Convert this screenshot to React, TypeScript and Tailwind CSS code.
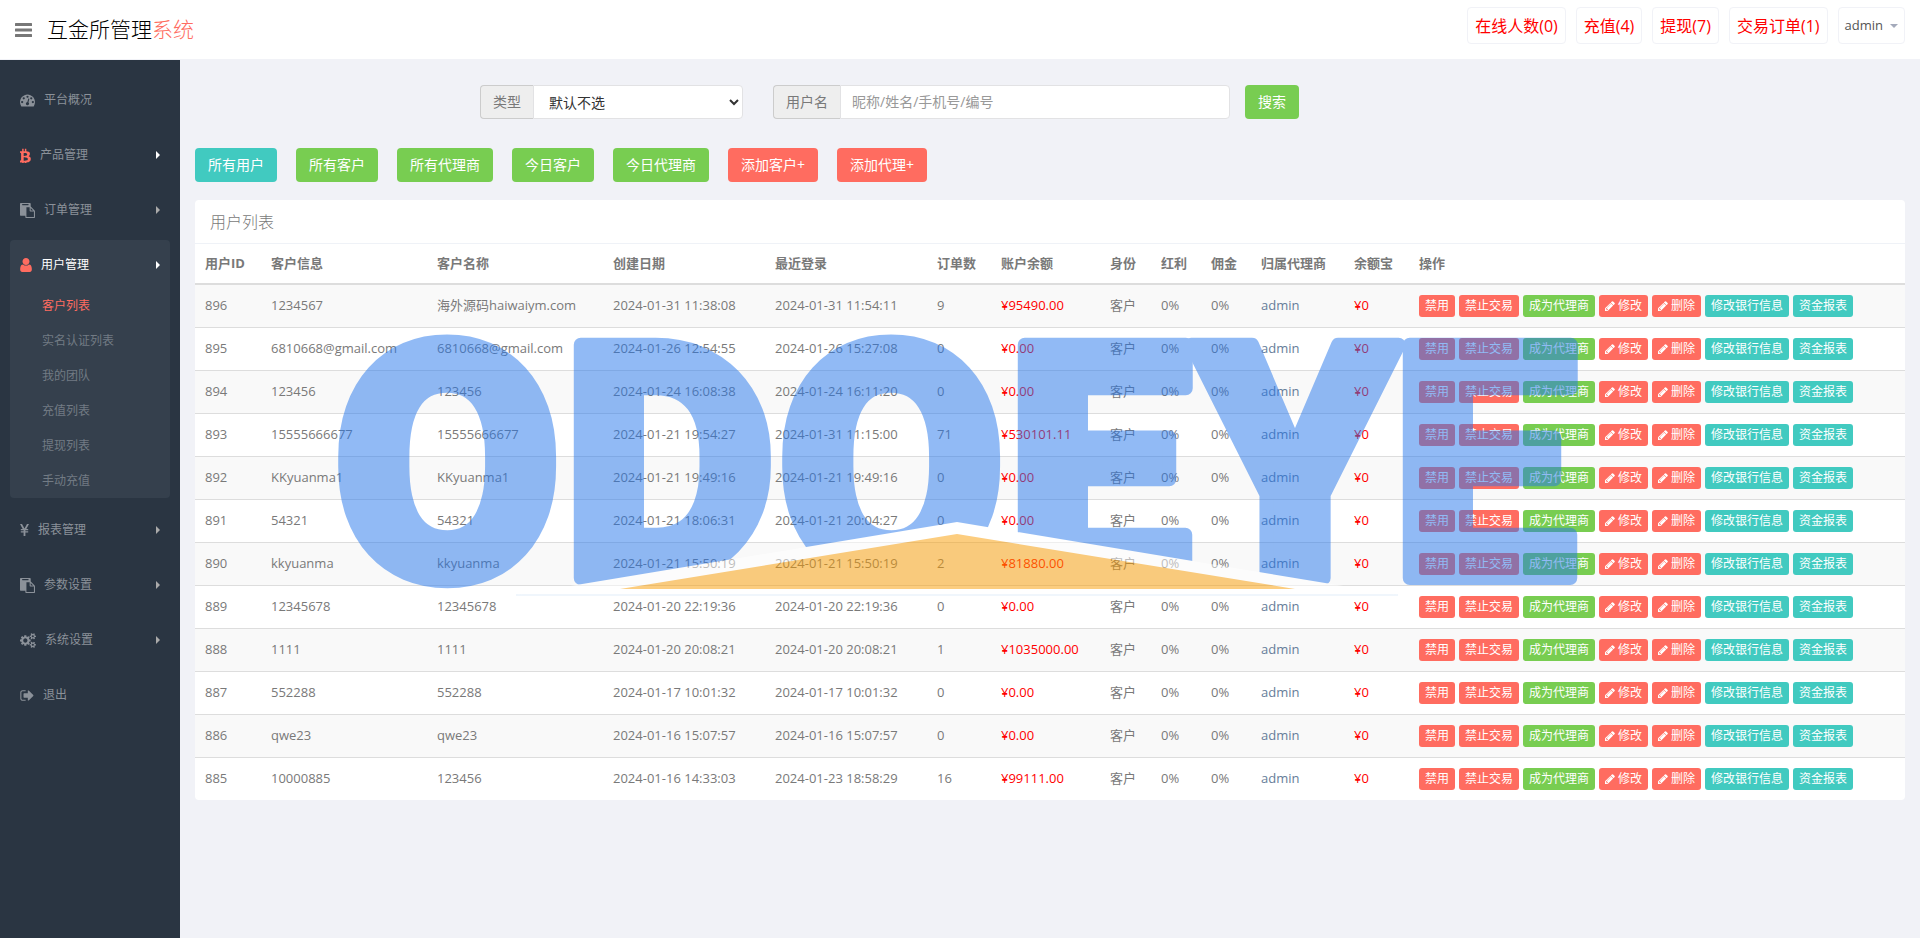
import React from 'react';

type IconName = 'dashboard' | 'bitcoin' | 'paste' | 'user' | 'yen' | 'cogs' | 'signOut';

const PASTE =
  'M768 1664h896v-640h-416q-40 0-68-28t-28-68v-416h-384v1152zm256-1440v-64q0-13-9.5-22.5t-22.5-9.5h-704q-13 0-22.5 9.5t-9.5 22.5v64q0 13 9.5 22.5t22.5 9.5h704q13 0 22.5-9.5t9.5-22.5zm256 672h299l-299-299v299zm512 128v672q0 40-28 68t-68 28h-960q-40 0-68-28t-28-68v-160h-544q-40 0-68-28t-28-68v-1344q0-40 28-68t68-28h1088q40 0 68 28t28 68v328q21 13 36 28l408 408q28 28 48 76t20 88z';

const ICONS: Record<IconName, { box: string; size: string; d: string }> = {
  dashboard: {
    box: '0 64 1792 1792',
    size: 'w-[15px] h-[15px]',
    d: 'M384 1152q0-53-37.5-90.5t-90.5-37.5-90.5 37.5-37.5 90.5 37.5 90.5 90.5 37.5 90.5-37.5 37.5-90.5zm192-448q0-53-37.5-90.5t-90.5-37.5-90.5 37.5-37.5 90.5 37.5 90.5 90.5 37.5 90.5-37.5 37.5-90.5zm428 481l101-382q6-26-7.5-48.5t-38.5-29.5-48 6.5-30 39.5l-101 382q-60 5-107 43.5t-63 98.5q-20 77 20 146t117 89 146-20 89-117q16-60-6-117t-72-91zm660-33q0-53-37.5-90.5t-90.5-37.5-90.5 37.5-37.5 90.5 37.5 90.5 90.5 37.5 90.5-37.5 37.5-90.5zm-640-640q0-53-37.5-90.5t-90.5-37.5-90.5 37.5-37.5 90.5 37.5 90.5 90.5 37.5 90.5-37.5 37.5-90.5zm448 192q0-53-37.5-90.5t-90.5-37.5-90.5 37.5-37.5 90.5 37.5 90.5 90.5 37.5 90.5-37.5 37.5-90.5zm320 448q0 261-141 483-19 29-54 29h-1402q-35 0-54-29-141-221-141-483 0-182 71-348t191-286 286-191 348-71 348 71 286 191 191 286 71 348z',
  },
  bitcoin: {
    box: '290 120 940 1552',
    size: 'w-[11px] h-[15px]',
    d: 'M1217 713q18 182-131 258 117 28 175 103t45 214q-7 71-32.5 125t-64.5 89-97 58.5-121.5 34.5-145.5 15v255h-154v-251q-80 0-122-1v252h-154v-255q-18 0-54-.5t-55-.5h-200l31-183h111q50 0 58-51v-402h16q-6-1-16-1v-287q-13-68-89-68h-111v-164l212 1q64 0 97-1v-252h154v247q82-2 122-2v-245h154v252q79 7 140 22.5t113 45 82.5 78 36.5 114.5zm-215 545q0-36-15-64t-37-46-57.5-30.5-65.5-18.5-74-9-69-3-64.5 1-47.5 1v338q8 0 37 .5t48 .5 53-1.5 58.5-4 57-8.5 55.5-14 47.5-21 39.5-30 24.5-40 9.5-51zm-71-476q0-33-12.5-58.5t-30.5-42-48-28-55-16.5-61.5-8-58-2.5-54 1-39.5.5v307q5 0 34.5.5t46.5 0 50-2 55-5.5 51.5-11 48.5-18.5 37-27 27-38.5 9-51z',
  },
  paste: { box: '0 0 1792 1792', size: 'w-[15px] h-[15px]', d: PASTE },
  user: {
    box: '256 128 1280 1536',
    size: 'w-3 h-[14px]',
    d: 'M1536 1399q0 109-62.5 187t-150.5 78h-854q-88 0-150.5-78t-62.5-187q0-85 8.5-160.5t31.5-152 58.5-131 94-89 134.5-34.5q131 128 313 128t313-128q76 0 134.5 34.5t94 89 58.5 131 31.5 152 8.5 160.5zm-256-887q0 159-112.5 271.5t-271.5 112.5-271.5-112.5-112.5-271.5 112.5-271.5 271.5-112.5 271.5 112.5 112.5 271.5z',
  },
  yen: {
    box: '0 0 9 12',
    size: 'w-[9px] h-3',
    d: 'M0 0h2l2.5 4.6L7 0h2L6.3 5h1.900v1.200H5.400v1h2.800v1.200H5.400V12H3.600V8.400H.8V7.200h2.800v-1H.8V5h1.900z',
  },
  cogs: {
    box: '0 0 1920 1792',
    size: 'w-4 h-[15px]',
    d: 'M896 896q0-106-75-181t-181-75-181 75-75 181 75 181 181 75 181-75 75-181zm768 512q0-52-38-90t-90-38-90 38-38 90q0 53 37.5 90.5t90.5 37.5 90.5-37.5 37.5-90.5zm0-1024q0-52-38-90t-90-38-90 38-38 90q0 53 37.5 90.5t90.5 37.5 90.5-37.5 37.5-90.5zm-384 421v185q0 10-7 19.5t-16 10.5l-155 24q-11 35-32 76 34 48 90 115 7 11 7 20 0 12-7 19-23 30-82.5 89.5t-78.5 59.5q-11 0-21-7l-115-90q-37 19-77 31-11 108-23 155-7 24-30 24h-186q-11 0-20-7.5t-10-17.5l-23-153q-34-10-75-31l-118 89q-7 7-20 7-11 0-21-8-144-133-144-160 0-9 7-19 10-14 41-53t47-61q-23-44-35-82l-152-24q-10-1-17-9.5t-7-19.5v-185q0-10 7-19.5t16-10.5l155-24q11-35 32-76-34-48-90-115-7-11-7-20 0-12 7-20 22-30 82-89t79-59q11 0 21 7l115 90q34-18 77-32 11-108 23-154 7-24 30-24h186q11 0 20 7.5t10 17.5l23 153q34 10 75 31l118-89q8-7 20-7 11 0 21 8 144 133 144 160 0 8-7 19-12 16-42 54t-45 60q23 48 34 82l152 23q10 2 17 10.5t7 19.5zm640 533v140q0 16-149 31-12 27-30 52 51 113 51 138 0 4-4 7-122 71-124 71-8 0-46-47t-52-68q-20 2-30 2t-30-2q-14 21-52 68t-46 47q-2 0-124-71-4-3-4-7 0-25 51-138-18-25-30-52-149-15-149-31v-140q0-16 149-31 13-29 30-52-51-113-51-138 0-4 4-7 4-2 35-20t59-34 30-16q8 0 46 46.5t52 67.5q20-2 30-2t30 2q51-71 92-112l6-2q4 0 124 70 4 3 4 7 0 25-51 138 17 23 30 52 149 15 149 31zm0-1024v140q0 16-149 31-12 27-30 52 51 113 51 138 0 4-4 7-122 71-124 71-8 0-46-47t-52-68q-20 2-30 2t-30-2q-14 21-52 68t-46 47q-2 0-124-71-4-3-4-7 0-25 51-138-18-25-30-52-149-15-149-31v-140q0-16 149-31 13-29 30-52-51-113-51-138 0-4 4-7 4-2 35-20t59-34 30-16q8 0 46 46.5t52 67.5q20-2 30-2t30 2q51-71 92-112l6-2q4 0 124 70 4 3 4 7 0 25-51 138 17 23 30 52 149 15 149 31z',
  },
  signOut: {
    box: '64 0 1600 1792',
    size: 'w-[14px] h-[15px]',
    d: 'M704 1440q0 4 1 20t.5 26.5-3 23.5-10 19.5-20.5 6.5h-320q-119 0-203.5-84.5t-84.5-203.5v-704q0-119 84.5-203.5t203.5-84.5h320q13 0 22.5 9.5t9.5 22.5q0 4 1 20t.5 26.5-3 23.5-10 19.5-20.5 6.5h-320q-66 0-113 47t-47 113v704q0 66 47 113t113 47h312l11.5 1 11.5 3 8 5.5 7 9 2 13.5zm928-544q0 26-19 45l-544 544q-19 19-45 19t-45-19-19-45v-288h-448q-26 0-45-19t-19-45v-384q0-26 19-45t45-19h448v-288q0-26 19-45t45-19 45 19l544 544q19 19 19 45z',
  },
};

const PENCIL =
  'M491 1536l91-91-235-235-91 91v107h128v128h107zm523-928q0-22-22-22-10 0-17 7l-542 542q-7 7-7 17 0 22 22 22 10 0 17-7l542-542q7-7 7-17zm-54-192l416 416-832 832h-416v-416zm683 96q0 53-37 90l-166 166-416-416 166-165q36-38 90-38 53 0 91 38l235 234q37 39 37 91z';

interface MenuItem {
  label: string;
  icon: IconName;
  arrow?: boolean;
  hot?: boolean;
  children?: string[];
}

const menu: MenuItem[] = [
  { label: '平台概况', icon: 'dashboard' },
  { label: '产品管理', icon: 'bitcoin', arrow: true, hot: true },
  { label: '订单管理', icon: 'paste', arrow: true },
  {
    label: '用户管理',
    icon: 'user',
    arrow: true,
    hot: true,
    children: ['客户列表', '实名认证列表', '我的团队', '充值列表', '提现列表', '手动充值'],
  },
  { label: '报表管理', icon: 'yen', arrow: true },
  { label: '参数设置', icon: 'paste', arrow: true },
  { label: '系统设置', icon: 'cogs', arrow: true },
  { label: '退出', icon: 'signOut' },
];

const notices = ['在线人数(0)', '充值(4)', '提现(7)', '交易订单(1)'];

const filters = [
  { label: '所有用户', color: 'bg-[#41cac0]' },
  { label: '所有客户', color: 'bg-[#78cd51]' },
  { label: '所有代理商', color: 'bg-[#78cd51]' },
  { label: '今日客户', color: 'bg-[#78cd51]' },
  { label: '今日代理商', color: 'bg-[#78cd51]' },
  { label: '添加客户+', color: 'bg-[#ff6c60]' },
  { label: '添加代理+', color: 'bg-[#ff6c60]' },
];

const columns = [
  { title: '用户ID', width: 'w-[66px]' },
  { title: '客户信息', width: 'w-[166px]' },
  { title: '客户名称', width: 'w-[176px]' },
  { title: '创建日期', width: 'w-[162px]' },
  { title: '最近登录', width: 'w-[162px]' },
  { title: '订单数', width: 'w-[64px]' },
  { title: '账户余额', width: 'w-[109px]' },
  { title: '身份', width: 'w-[51px]' },
  { title: '红利', width: 'w-[50px]' },
  { title: '佣金', width: 'w-[50px]' },
  { title: '归属代理商', width: 'w-[93px]' },
  { title: '余额宝', width: 'w-[65px]' },
  { title: '操作', width: 'w-auto' },
];

// id, info, name, created, last login, orders, balance
const users = [
  ['896', '1234567', '海外源码haiwaiym.com', '2024-01-31 11:38:08', '2024-01-31 11:54:11', '9', '95490.00'],
  ['895', '6810668@gmail.com', '6810668@gmail.com', '2024-01-26 12:54:55', '2024-01-26 15:27:08', '0', '0.00'],
  ['894', '123456', '123456', '2024-01-24 16:08:38', '2024-01-24 16:11:20', '0', '0.00'],
  ['893', '15555666677', '15555666677', '2024-01-21 19:54:27', '2024-01-31 11:15:00', '71', '530101.11'],
  ['892', 'KKyuanma1', 'KKyuanma1', '2024-01-21 19:49:16', '2024-01-21 19:49:16', '0', '0.00'],
  ['891', '54321', '54321', '2024-01-21 18:06:31', '2024-01-21 20:04:27', '0', '0.00'],
  ['890', 'kkyuanma', 'kkyuanma', '2024-01-21 15:50:19', '2024-01-21 15:50:19', '2', '81880.00'],
  ['889', '12345678', '12345678', '2024-01-20 22:19:36', '2024-01-20 22:19:36', '0', '0.00'],
  ['888', '1111', '1111', '2024-01-20 20:08:21', '2024-01-20 20:08:21', '1', '1035000.00'],
  ['887', '552288', '552288', '2024-01-17 10:01:32', '2024-01-17 10:01:32', '0', '0.00'],
  ['886', 'qwe23', 'qwe23', '2024-01-16 15:07:57', '2024-01-16 15:07:57', '0', '0.00'],
  ['885', '10000885', '123456', '2024-01-16 14:33:03', '2024-01-23 18:58:29', '16', '99111.00'],
];

const actions = [
  { label: '禁用', color: 'bg-[#ff6c60]' },
  { label: '禁止交易', color: 'bg-[#ff6c60]' },
  { label: '成为代理商', color: 'bg-[#78cd51]' },
  { label: '修改', color: 'bg-[#ff6c60]', pencil: true },
  { label: '删除', color: 'bg-[#ff6c60]', pencil: true },
  { label: '修改银行信息', color: 'bg-[#41cac0]' },
  { label: '资金报表', color: 'bg-[#41cac0]' },
];

function Icon({ name }: { name: IconName }) {
  const icon = ICONS[name];
  return (
    <svg className={`${icon.size} shrink-0`} viewBox={icon.box} fill="currentColor" aria-hidden="true">
      <path d={icon.d} />
    </svg>
  );
}

function Header() {
  return (
    <header className="flex h-[60px] items-start justify-between border-b border-[#f1f2f7] bg-white px-[15px]">
      <div className="flex h-[60px] items-center gap-[15px]">
        <button type="button" aria-label="菜单" className="text-[#777777]">
          <svg className="h-[14px] w-[17px]" viewBox="0 0 17 14" fill="currentColor">
            <rect width="17" height="3" rx="0.500" />
            <rect y="5.500" width="17" height="3" rx="0.500" />
            <rect y="11" width="17" height="3" rx="0.500" />
          </svg>
        </button>
        <a href="#" className="text-[21px] font-light text-black">
          互金所管理<span className="text-[#ff6c60]">系统</span>
        </a>
      </div>
      <nav className="flex gap-[10px] pt-[7px]">
        {notices.map((text) => (
          <a
            key={text}
            href="#"
            className="flex h-[37px] items-center rounded border border-[#f1f2f7] px-[7px] text-base text-[#ff0000]"
          >
            {text}
          </a>
        ))}
        <button
          type="button"
          className="flex h-[37px] items-center gap-[7px] rounded border border-[#f1f2f7] px-[6px] text-[13px] text-[#555555]"
        >
          admin
          <svg className="h-1 w-2" viewBox="0 0 8 4" fill="#a4aabb">
            <path d="M0 0h8L4 4z" />
          </svg>
        </button>
      </nav>
    </header>
  );
}

function Sidebar() {
  return (
    <aside className="w-[180px] shrink-0 bg-[#2a3542] px-[10px] pt-[15px] text-xs">
      <ul className="flex flex-col gap-[7px]">
        {menu.map((item) => (
          <li key={item.label} className={item.children ? 'rounded bg-[#35404d]' : ''}>
            <a
              href="#"
              className={`flex h-12 items-center gap-[9px] px-[10px] pt-[2px] ${item.children ? 'text-white' : 'text-[#8b9199]'}`}
            >
              <span className={item.hot ? 'text-[#ff6c60]' : ''}>
                <Icon name={item.icon} />
              </span>
              {item.label}
              {item.arrow && (
                <svg
                  className={`ml-auto h-2 w-1 ${item.hot ? 'text-white' : 'text-[#aaaaaa]'}`}
                  viewBox="0 0 4 8"
                  fill="currentColor"
                >
                  <path d="M0 0l4 4-4 4z" />
                </svg>
              )}
            </a>
            {item.children && (
              <ul>
                {item.children.map((child, i) => (
                  <li key={child}>
                    <a
                      href="#"
                      className={`flex h-[35px] items-center pl-8 ${i === 0 ? 'text-[#ff6c60]' : 'text-[#727b84]'}`}
                    >
                      {child}
                    </a>
                  </li>
                ))}
              </ul>
            )}
          </li>
        ))}
      </ul>
    </aside>
  );
}

function SearchForm() {
  return (
    <form className="flex pl-[285px] text-sm" onSubmit={(e) => e.preventDefault()}>
      <div className="flex h-[34px] w-[263px]">
        <label
          htmlFor="type"
          className="flex w-[53px] shrink-0 items-center justify-center rounded-l border border-r-0 border-[#cccccc] bg-[#eeeeee] text-[#797979]"
        >
          类型
        </label>
        <select id="type" className="min-w-0 flex-1 rounded-r border border-[#e2e2e4] bg-white px-[11px] text-[#333333]">
          <option>默认不选</option>
        </select>
      </div>
      <div className="ml-[30px] flex h-[34px] w-[457px]">
        <label
          htmlFor="username"
          className="flex w-[67px] shrink-0 items-center justify-center rounded-l border border-r-0 border-[#cccccc] bg-[#eeeeee] text-[#797979]"
        >
          用户名
        </label>
        <input
          id="username"
          type="text"
          placeholder="昵称/姓名/手机号/编号"
          className="min-w-0 flex-1 rounded-r border border-[#e2e2e4] bg-white px-[11px] placeholder:text-[#999999]"
        />
      </div>
      <button type="submit" className="ml-[15px] h-[34px] rounded bg-[#78cd51] px-[13px] text-white">
        搜索
      </button>
    </form>
  );
}

function UserTable() {
  return (
    <section className="mt-[18px] rounded bg-white">
      <h2 className="flex h-11 items-center border-b border-[#eff2f7] px-[15px] text-base font-light">用户列表</h2>
      <table className="w-full table-fixed border-collapse text-left">
        <thead>
          <tr className="h-10 border-b-2 border-[#dddddd]">
            {columns.map((col) => (
              <th key={col.title} className={`${col.width} whitespace-nowrap px-[10px] font-bold`}>
                {col.title}
              </th>
            ))}
          </tr>
        </thead>
        <tbody>
          {users.map(([id, info, name, created, login, orders, balance]) => (
            <tr key={id} className="h-[43px] whitespace-nowrap border-b border-[#dddddd] last:border-b-0 odd:bg-[#f9f9f9]">
              <td className="px-[10px]">{id}</td>
              <td className="px-[10px]">{info}</td>
              <td className="px-[10px]">{name}</td>
              <td className="px-[10px]">{created}</td>
              <td className="px-[10px]">{login}</td>
              <td className="px-[10px]">{orders}</td>
              <td className="px-[10px] text-[#ff0000]">¥{balance}</td>
              <td className="px-[10px]">客户</td>
              <td className="px-[10px]">0%</td>
              <td className="px-[10px]">0%</td>
              <td className="px-[10px]">
                <a href="#" className="text-[#667d99]">
                  admin
                </a>
              </td>
              <td className="px-[10px] text-[#ff0000]">¥0</td>
              <td className="px-[10px]">
                <div className="flex gap-1 text-xs text-white">
                  {actions.map((action) => (
                    <button
                      key={action.label}
                      type="button"
                      className={`flex h-[22px] items-center gap-[3px] rounded-[3px] px-[6px] ${action.color}`}
                    >
                      {action.pencil && (
                        <svg className="h-[10px] w-[10px]" viewBox="128 128 1536 1536" fill="currentColor">
                          <path d={PENCIL} />
                        </svg>
                      )}
                      {action.label}
                    </button>
                  ))}
                </div>
              </td>
            </tr>
          ))}
        </tbody>
      </table>
    </section>
  );
}

function Watermark() {
  return (
    <div className="pointer-events-none fixed inset-0 flex items-center justify-center">
      <svg className="w-[1240px] overflow-visible opacity-50" viewBox="340 334 1240 270">
        <text
          x="334 563 778 1007 1192 1392"
          y="578"
          fontSize="328"
          className="fill-[#2577eb] stroke-[#2577eb] font-[Roboto] font-black"
          strokeWidth="14"
          strokeLinejoin="round"
        >
          ODOEYE
        </text>
        <path d="M516 595L957 522l441 73z" fill="#ffffff" />
        <path d="M620 589l337-55 338 55z" fill="#f99b00" />
        <path d="M516 595h882" stroke="#c4dcf4" />
      </svg>
    </div>
  );
}

export default function App() {
  return (
    <div className="flex min-h-screen flex-col bg-[#f1f2f7] font-['Open_Sans','Noto_Sans_CJK_SC',sans-serif] text-[13px] text-[#797979]">
      <Header />
      <div className="flex flex-1">
        <Sidebar />
        <main className="min-w-0 flex-1 px-[15px] pt-[25px]">
          <SearchForm />
          <div className="mt-[29px] flex flex-wrap gap-[19px] text-sm text-white">
            {filters.map((f) => (
              <button key={f.label} type="button" className={`h-[34px] rounded px-[13px] ${f.color}`}>
                {f.label}
              </button>
            ))}
          </div>
          <UserTable />
        </main>
      </div>
      <Watermark />
    </div>
  );
}
